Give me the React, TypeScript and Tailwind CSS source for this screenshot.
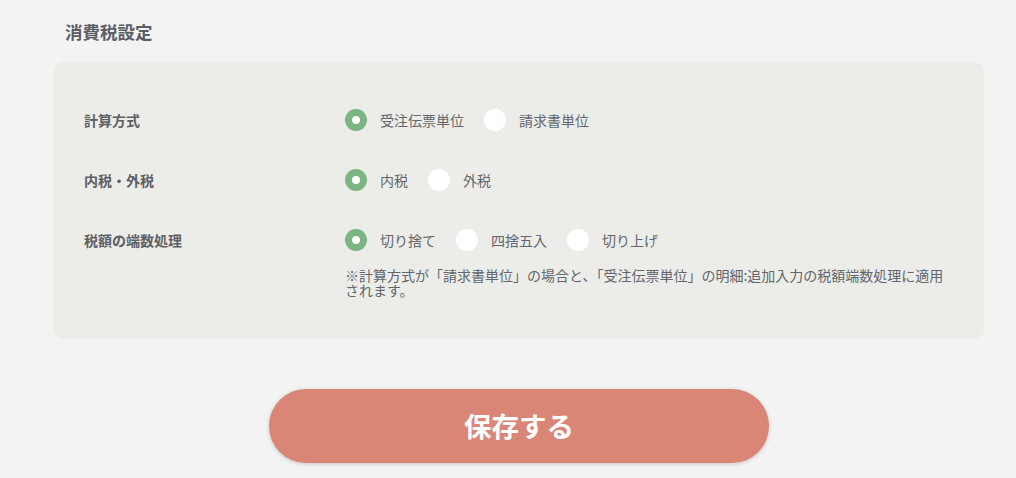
import { useState } from "react"

type Option = { value: string; label: string }

const rows: { key: string; label: string; options: Option[]; initial: string }[] = [
  {
    key: "calc",
    label: "計算方式",
    options: [
      { value: "order", label: "受注伝票単位" },
      { value: "invoice", label: "請求書単位" },
    ],
    initial: "order",
  },
  {
    key: "incl",
    label: "内税・外税",
    options: [
      { value: "inner", label: "内税" },
      { value: "outer", label: "外税" },
    ],
    initial: "inner",
  },
  {
    key: "round",
    label: "税額の端数処理",
    options: [
      { value: "down", label: "切り捨て" },
      { value: "half", label: "四捨五入" },
      { value: "up", label: "切り上げ" },
    ],
    initial: "down",
  },
]

function Radio({ checked, label, onClick }: { checked: boolean; label: string; onClick: () => void }) {
  return (
    <button type="button" onClick={onClick} className="flex items-center gap-[13px]">
      {checked ? (
        <span className="flex h-[22px] w-[22px] items-center justify-center rounded-full bg-[#7bb584]">
          <span className="h-[8px] w-[8px] rounded-full bg-white" />
        </span>
      ) : (
        <span className="h-[22px] w-[22px] rounded-full bg-white" />
      )}
      <span className="text-[14px] leading-[22px] text-[#62656b]">{label}</span>
    </button>
  )
}

export default function App() {
  const [values, setValues] = useState<Record<string, string>>(
    Object.fromEntries(rows.map((r) => [r.key, r.initial]))
  )

  return (
    <div
      className="min-h-[478px] w-full bg-[#f2f3f2] pt-5"
      style={{ fontFamily: '"Noto Sans CJK JP", "Noto Sans", sans-serif' }}
    >
      <h2 className="ml-[65px] text-[17.5px] font-bold leading-6 text-[#5b5e66]">消費税設定</h2>

      <div className="mx-[54px] mt-[18px] w-[930px] rounded-[9px] bg-[#ecede8] pt-[47px] pb-[41px] pl-[30px] pr-[30px]">
        <div className="flex flex-col gap-[38px]">
          {rows.map((row) => (
            <div key={row.key} className="flex items-center">
              <div className="w-[261px] text-[14px] font-bold leading-[22px] text-[#5c5f66]">{row.label}</div>
              <div className="flex items-center gap-5">
                {row.options.map((opt) => (
                  <Radio
                    key={opt.value}
                    label={opt.label}
                    checked={values[row.key] === opt.value}
                    onClick={() => setValues({ ...values, [row.key]: opt.value })}
                  />
                ))}
              </div>
            </div>
          ))}
        </div>
        <p className="ml-[261px] mt-[17px] w-[604px] text-[14px] leading-[15px] text-[#62656b]">
          ※計算方式が「請求書単位」の場合と、「受注伝票単位」の明細:追加入力の税額端数処理に適用されます。
        </p>
      </div>

      <div className="mx-[54px] mt-[50px] flex w-[930px] justify-center pb-[15px]">
        <button
          type="button"
          className="h-[74px] w-[500px] rounded-full bg-[#d98676] text-[27.5px] font-bold text-white shadow-[0_1px_4px_rgba(0,0,0,0.18)]"
        >
          保存する
        </button>
      </div>
    </div>
  )
}
